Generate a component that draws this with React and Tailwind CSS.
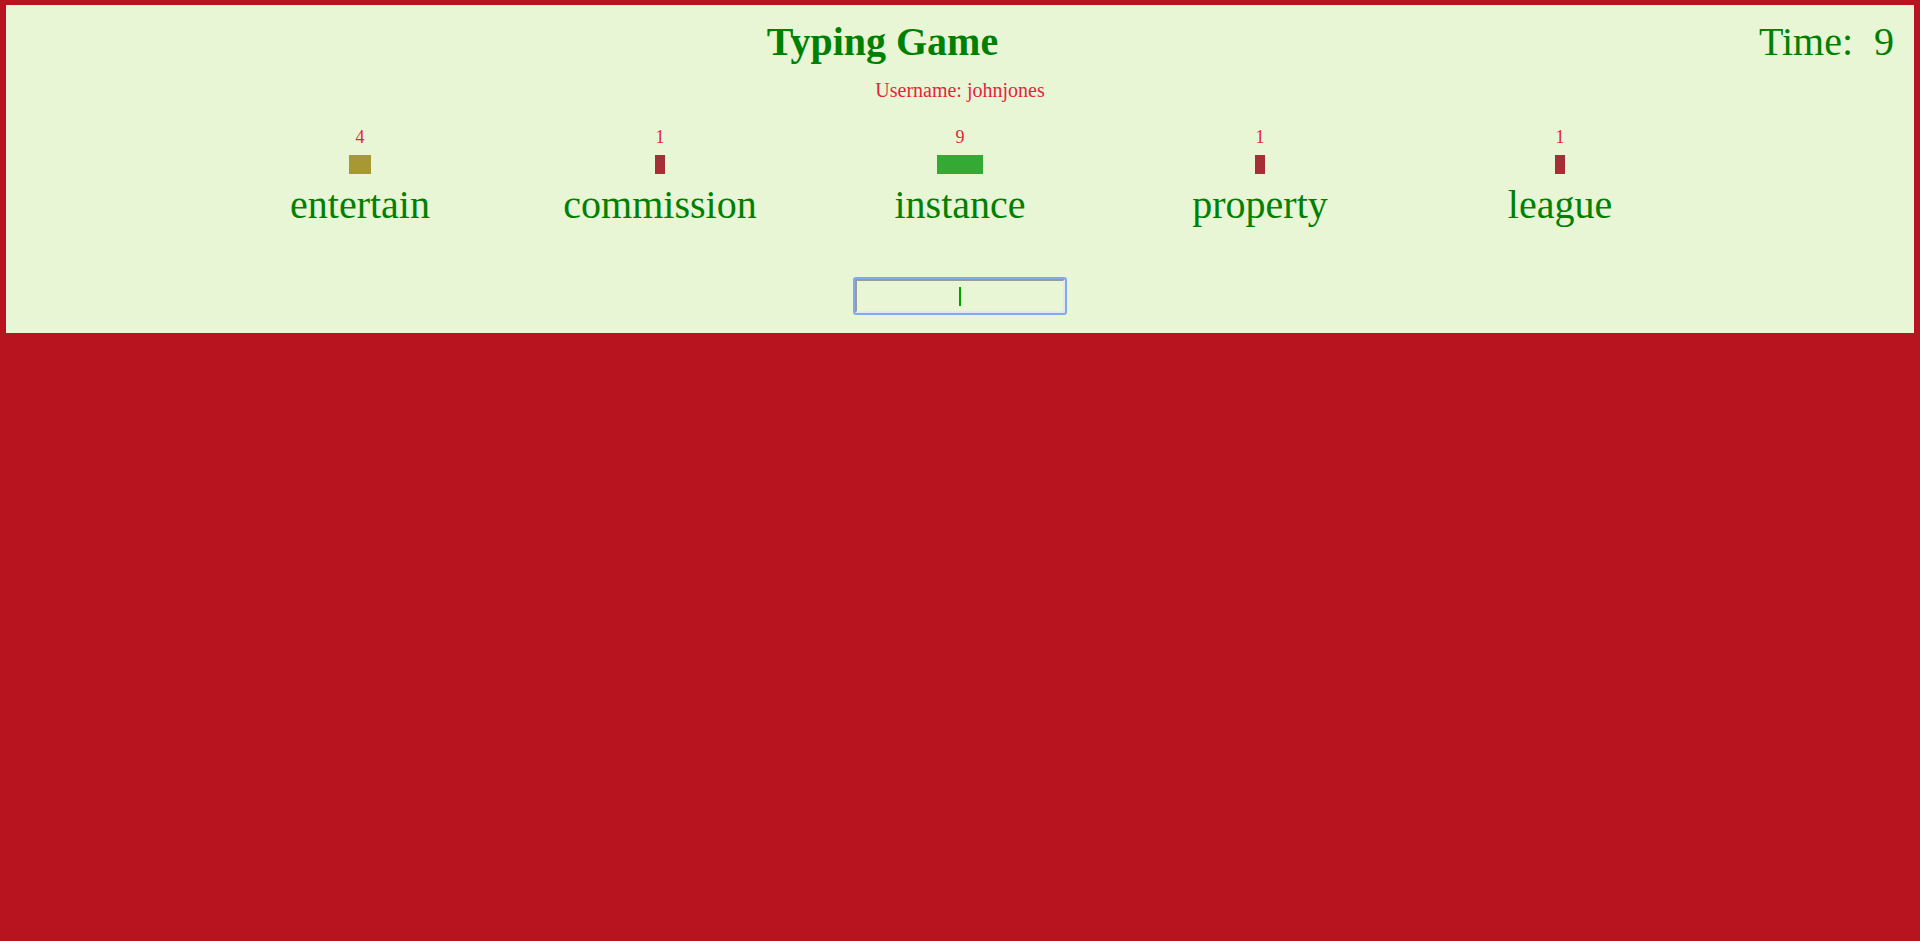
import { useState } from 'react';

const words = [
  { word: 'entertain', count: 4, width: 22, color: 'bg-[#a89834]' },
  { word: 'commission', count: 1, width: 10, color: 'bg-[#a52f35]' },
  { word: 'instance', count: 9, width: 46, color: 'bg-[#34aa34]' },
  { word: 'property', count: 1, width: 10, color: 'bg-[#a52f35]' },
  { word: 'league', count: 1, width: 10, color: 'bg-[#a52f35]' },
];

function WordColumn({ item }) {
  return (
    <div className="w-[300px] flex flex-col items-center">
      <span className="text-[18px] leading-[18px] text-[#e5243b]">{item.count}</span>
      <div className={`mt-[9px] h-[19px] ${item.color}`} style={{ width: item.width }} />
      <span className="mt-[9px] text-[40px] leading-[44px] text-[#008000]">{item.word}</span>
    </div>
  );
}

export default function App() {
  const [typed, setTyped] = useState('');

  return (
    <div className="min-h-screen bg-[#b7141f] pt-[5px] pl-[6px] pr-[6px] font-['Liberation_Serif','Times_New_Roman',serif]">
      <div className="bg-[#e8f6d6] pt-[15px] pb-[20px] flex flex-col">
        <div className="flex items-baseline pr-5">
          <h1 className="flex-1 text-center text-[40px] leading-[44px] font-bold text-[#008000]">Typing Game</h1>
          <div className="text-[40px] leading-[44px] text-[#008000]">
            Time:<span className="ml-[21px]">9</span>
          </div>
        </div>
        <p className="mt-[14px] text-center text-[20px] leading-[24px] text-[#e5243b]">Username: johnjones</p>
        <div className="mt-[26px] flex justify-center">
          {words.map(item => (
            <WordColumn key={item.word} item={item} />
          ))}
        </div>
        <div className="mt-[52px] flex justify-center">
          <div className="relative">
            <input
              autoFocus
              value={typed}
              onChange={e => setTyped(e.target.value)}
              className="block w-[210px] h-[34px] px-[2px] text-center text-[20px] text-[#008000] caret-[#008000] bg-transparent border-2 border-t-[#9a9a9a] border-l-[#9a9a9a] border-b-[#e3e8f0] border-r-[#e3e8f0] outline-2 outline-[#7faaf0] rounded-[1px]"
            />
            {typed === '' && (
              <span className="pointer-events-none absolute left-[104px] top-[8px] w-[2px] h-[19px] bg-[#00a000]" />
            )}
          </div>
        </div>
      </div>
    </div>
  );
}
